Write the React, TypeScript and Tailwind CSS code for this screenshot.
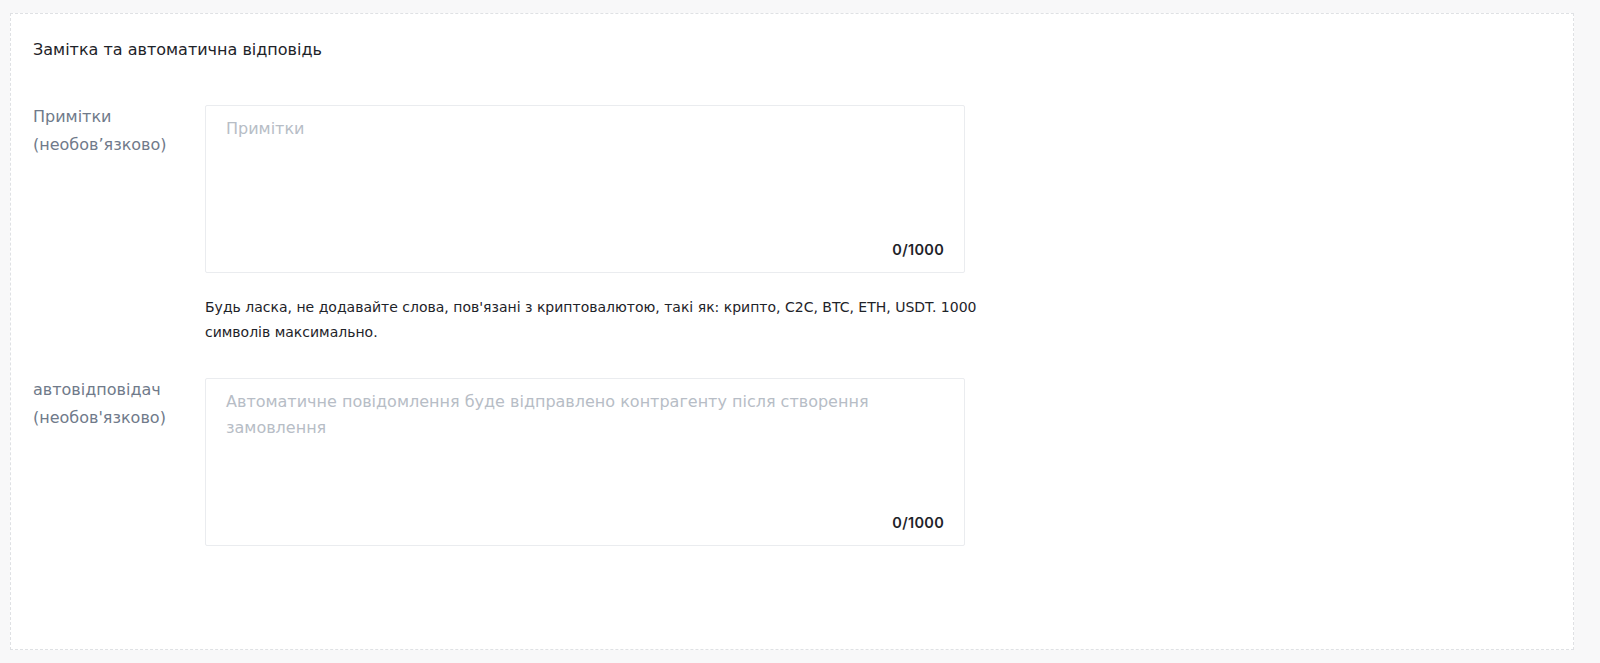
function NoteField({
  label,
  placeholder,
}: {
  label: [string, string];
  placeholder: string;
}) {
  return (
    <div className="flex items-start">
      <div className="-mt-[2px] w-[172px] shrink-0 text-[16px] leading-[28px] text-[#707a8a]">
        <div>{label[0]}</div>
        <div>{label[1]}</div>
      </div>
      <div className="flex h-[168px] w-[760px] flex-col justify-between rounded-[2px] border border-[#eaecef] bg-white px-5 pb-[12px] pt-[10px]">
        <p className="text-[16px] leading-[26px] text-[#b7bdc6]">{placeholder}</p>
        <p className="text-right font-['Inter',sans-serif] text-[14.5px] font-semibold leading-[20px] tracking-[0.3px] text-[#1e2329]">
          0/1000
        </p>
      </div>
    </div>
  );
}

export default function App() {
  return (
    <div className="min-h-[663px] bg-[#f8f8f9] pb-[13px] pl-[10px] pr-[26px] pt-[13px] font-['DejaVu_Sans','Noto_Sans',sans-serif]">
      <div className="h-[637px] border border-dashed border-[#dfe1e4] bg-white px-[22px] pt-[24px]">
        <h2 className="text-[16px] leading-[24px] text-[#1e2329]">
          Замітка та автоматична відповідь
        </h2>

        <div className="mt-[43px]">
          <NoteField label={["Примітки", "(необов’язково)"]} placeholder="Примітки" />
          <p className="ml-[172px] mt-[22px] w-[790px] text-[14px] leading-[25px] text-[#1e2329]">
            Будь ласка, не додавайте слова, пов'язані з криптовалютою, такі як: крипто, C2C, BTC,
            ETH, USDT. 1000 символів максимально.
          </p>
        </div>

        <div className="mt-[33px]">
          <NoteField
            label={["автовідповідач", "(необов'язково)"]}
            placeholder="Автоматичне повідомлення буде відправлено контрагенту після створення замовлення"
          />
        </div>
      </div>
    </div>
  );
}
